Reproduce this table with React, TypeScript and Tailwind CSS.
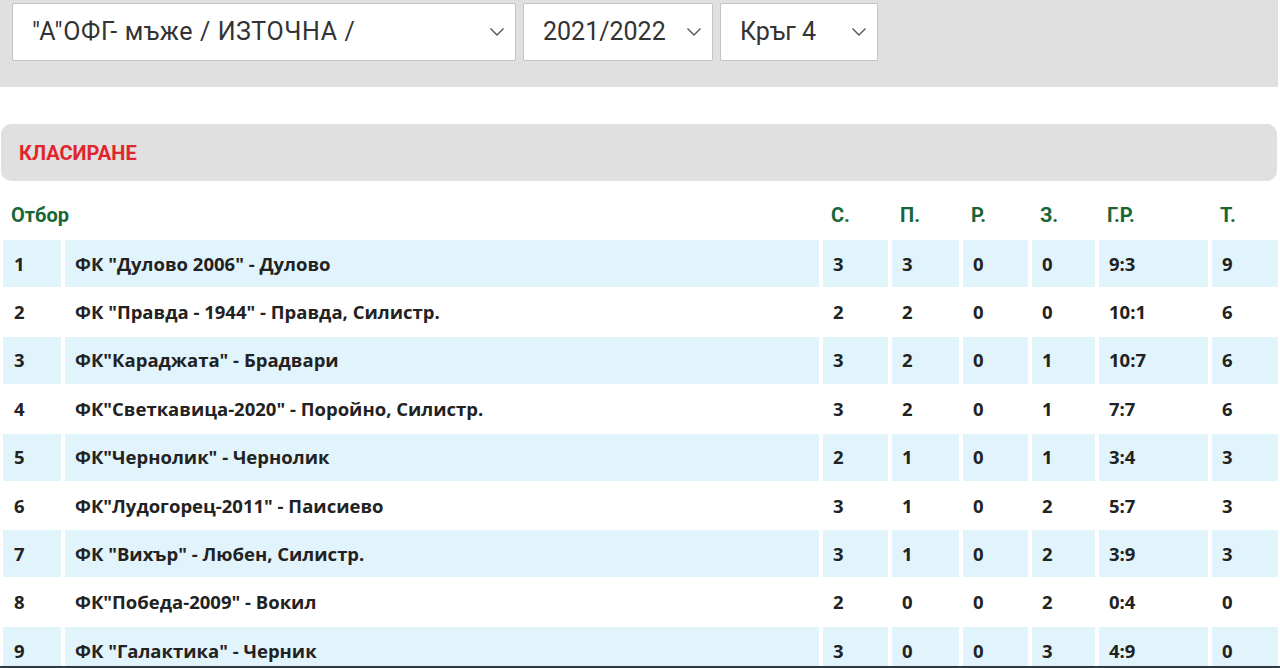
const rows = [
  { pos: 1, team: 'ФК "Дулово 2006" - Дулово', s: 3, w: 3, d: 0, l: 0, gd: '9:3', pts: 9 },
  { pos: 2, team: 'ФК "Правда - 1944" - Правда, Силистр.', s: 2, w: 2, d: 0, l: 0, gd: '10:1', pts: 6 },
  { pos: 3, team: 'ФК"Караджата" - Брадвари', s: 3, w: 2, d: 0, l: 1, gd: '10:7', pts: 6 },
  { pos: 4, team: 'ФК"Светкавица-2020" - Поройно, Силистр.', s: 3, w: 2, d: 0, l: 1, gd: '7:7', pts: 6 },
  { pos: 5, team: 'ФК"Чернолик" - Чернолик', s: 2, w: 1, d: 0, l: 1, gd: '3:4', pts: 3 },
  { pos: 6, team: 'ФК"Лудогорец-2011" - Паисиево', s: 3, w: 1, d: 0, l: 2, gd: '5:7', pts: 3 },
  { pos: 7, team: 'ФК "Вихър" - Любен, Силистр.', s: 3, w: 1, d: 0, l: 2, gd: '3:9', pts: 3 },
  { pos: 8, team: 'ФК"Победа-2009" - Вокил', s: 2, w: 0, d: 0, l: 2, gd: '0:4', pts: 0 },
  { pos: 9, team: 'ФК "Галактика" - Черник', s: 3, w: 0, d: 0, l: 3, gd: '4:9', pts: 0 },
]

const cols = 'grid grid-cols-[58px_754px_65px_67px_65px_63px_109px_66px] gap-x-1'

function Chevron() {
  return (
    <svg width="16" height="10" viewBox="0 0 16 10" fill="none" className="shrink-0">
      <path d="M1.5 1.5 L8 8 L14.5 1.5" stroke="#555" strokeWidth="1.4" />
    </svg>
  )
}

function Select({ label, className, labelClass = '' }: { label: string; className: string; labelClass?: string }) {
  return (
    <div className={`h-[58px] flex items-center justify-between bg-white border border-[#c4c4c4] rounded-[2px] pl-[19px] pr-[10px] ${className}`}>
      <span className={`text-[25px] text-[#333] font-['Roboto',sans-serif] ${labelClass}`}>{label}</span>
      <Chevron />
    </div>
  )
}

export default function App() {
  return (
    <div className="min-h-screen bg-white font-['Open_Sans',sans-serif]">
      {/* Filters */}
      <div className="bg-[#e0e0e0] w-[1278px] h-[87px] pt-[3px] pl-3 flex gap-[7px]">
        <Select label={'"А"ОФГ- мъже / ИЗТОЧНА /'} className="w-[504px]" labelClass="tracking-[0.6px]" />
        <Select label="2021/2022" className="w-[190px]" />
        <Select label="Кръг 4" className="w-[158px]" />
      </div>

      {/* Standings */}
      <div className="mt-[37px] ml-px w-[1276px] h-[57px] rounded-[10px] bg-[#e0e0e0] flex items-center pl-[18px]">
        <h2 className="text-[20px] font-bold text-[#e0262c] font-['Roboto',sans-serif]">КЛАСИРАНЕ</h2>
      </div>

      <div className="pl-[3px]">
        <div className={`${cols} pt-[23px] pb-[13px] text-[20px] leading-[23px] font-bold text-[#186637] font-['Roboto',sans-serif]`}>
          <div className="col-span-2 pl-2">Отбор</div>
          <div className="pl-2">С.</div>
          <div className="pl-2">П.</div>
          <div className="pl-2">Р.</div>
          <div className="pl-2">З.</div>
          <div className="pl-2">Г.Р.</div>
          <div className="pl-2">Т.</div>
        </div>

        <div className="flex flex-col gap-y-[1.4px]">
          {rows.map((r, i) => {
            const cell = `h-[47px] flex items-center pl-[10px] ${i % 2 === 0 ? 'bg-[#e1f4fc]' : ''}`
            return (
              <div key={r.pos} className={`${cols} text-[18.5px] font-bold text-[#222]`}>
                <div className={`${cell} pl-[11px]`}>{r.pos}</div>
                <div className={cell}>{r.team}</div>
                <div className={cell}>{r.s}</div>
                <div className={cell}>{r.w}</div>
                <div className={cell}>{r.d}</div>
                <div className={cell}>{r.l}</div>
                <div className={cell}>{r.gd}</div>
                <div className={cell}>{r.pts}</div>
              </div>
            )
          })}
        </div>
      </div>

      {/* fixed bottom bar edge */}
      <div className="fixed bottom-0 left-0 right-0 h-[2px] bg-[#2c3a40]" />
    </div>
  )
}
